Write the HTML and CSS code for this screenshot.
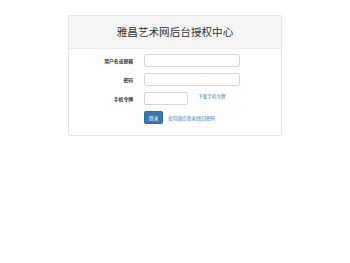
FILE: index.html
```html
<!DOCTYPE html>
<html lang="zh-CN">
<head>
    <meta charset="UTF-8">
    <meta name="viewport" content="width=device-width, initial-scale=1.0">
    <title>雅昌艺术网后台授权中心</title>
    <link rel="stylesheet" href="styles.css">
</head>
<body>
    <div class="panel">
        <div class="panel-heading">雅昌艺术网后台授权中心</div>
        <form class="panel-body">
            <label class="label">用户名或邮箱</label>
            <input class="field" type="text">

            <label class="label">密码</label>
            <input class="field" type="password">

            <label class="label">手机令牌</label>
            <div class="inline">
                <input class="field short" type="text">
                <a class="link token-link" href="#">下载手机令牌</a>
            </div>

            <span></span>
            <div class="inline">
                <button class="btn" type="button">登录</button>
                <span class="links"><a class="link" href="#">使用微信登录</a>|<a class="link" href="#">找回密码</a></span>
            </div>
        </form>
    </div>
</body>
</html>
```

FILE: styles.css
```css
body { margin: 0; padding-top: 15px; background: #fff; font-family: "Liberation Sans", "Noto Sans CJK SC", sans-serif; color: #333; }
.panel { width: 212px; margin: 0 auto; border: 1px solid #e3e3e3; border-radius: 2px; box-shadow: 0 1px 1px rgba(0,0,0,0.05); background: #fff; }
.panel-heading { height: 32px; line-height: 32px; text-align: center; background: #f5f5f5; border-bottom: 1px solid #ececec; font-size: 10.6px; color: #333; }
.panel-body { display: grid; grid-template-columns: 64px 1fr; column-gap: 11px; row-gap: 6px; align-items: center; padding: 5px 40px 11px 0; }
.label { text-align: right; font-size: 4.8px; font-weight: bold; color: #333; }
.field { box-sizing: border-box; width: 96px; height: 13px; margin: 0; padding: 0 3px; border: 1px solid #d6d6d6; border-radius: 2px; font-size: 5px; background: #fff; }
.field.short { width: 44px; }
.inline { display: flex; align-items: flex-start; gap: 10px; }
.token-link { margin-top: 1px; }
.link { font-size: 4.6px; color: #337ab7; text-decoration: none; }
.links { font-size: 4.6px; color: #337ab7; align-self: center; margin-left: -5px; }
.btn { box-sizing: border-box; width: 19px; height: 13px; padding: 0; border: 1px solid #2e6da4; border-radius: 1.5px; background: #337ab7; color: #fff; font-size: 4.8px; font-family: inherit; }
```
